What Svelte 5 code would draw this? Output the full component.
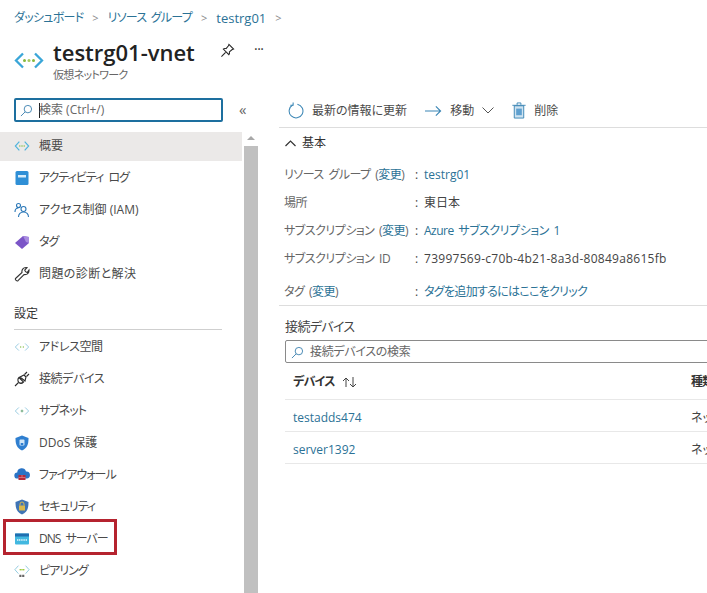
<script>
  const top = [
    { icon: 'vnet', label: '概要', active: true },
    { icon: 'log', label: 'アクティビティ ログ', fit: 'tight' },
    { icon: 'iam', label: 'アクセス制御 (IAM)' },
    { icon: 'tag', label: 'タグ', fit: 'tight' },
    { icon: 'wrench', label: '問題の診断と解決', fit: 'wide' }
  ];
  const settings = [
    { icon: 'addr', label: 'アドレス空間', fit: 'snug' },
    { icon: 'plug', label: '接続デバイス', fit: 'snug' },
    { icon: 'subnet', label: 'サブネット', fit: 'tight' },
    { icon: 'ddos', label: 'DDoS 保護' },
    { icon: 'fw', label: 'ファイアウォール', fit: 'tight' },
    { icon: 'sec', label: 'セキュリティ', fit: 'tight' },
    { icon: 'dns', label: 'DNS サーバー', marked: true, fit: 'tight' },
    { icon: 'peer', label: 'ピアリング', fit: 'tight' }
  ];
</script>

{#snippet icon(name)}
  {#if name === 'vnet'}
    <svg class="ic" viewBox="0 0 18 14" fill="none"><path d="M6 2 1.500 7 6 12M12 2l4.500 5L12 12" stroke="#4fb3dc" stroke-width="1.300"/><circle cx="6.500" cy="7" r=".9" fill="#8cc152"/><circle cx="9" cy="7" r=".9" fill="#8cc152"/><circle cx="11.500" cy="7" r=".9" fill="#8cc152"/></svg>
  {:else if name === 'log'}
    <svg class="ic" viewBox="0 0 16 16"><rect x="1.500" y="1" width="13" height="14" rx="1.500" fill="#2f8fd6"/><rect x="4" y="5" width="8" height="2.500" fill="#d7ecfa"/></svg>
  {:else if name === 'iam'}
    <svg class="ic" viewBox="0 0 16 16" fill="none" stroke="#2b78b8" stroke-width="1.100"><circle cx="4.500" cy="3.500" r="2"/><path d="M1 10c0-2.500 1.500-4 3.500-4"/><circle cx="9.500" cy="7" r="2.500"/><path d="M4.500 15c0-3 2-5 5-5s5 2 5 5"/></svg>
  {:else if name === 'tag'}
    <svg class="ic" viewBox="0 0 16 16"><path d="M1 9 9 2l6 1v6l-7 6z" fill="#7b55c7"/><path d="M9 2l6 1v6l-3-1z" fill="#a88be0"/></svg>
  {:else if name === 'wrench'}
    <svg class="ic" viewBox="0 0 16 16" fill="none" stroke="#333" stroke-width="1.100"><path d="M1.500 12.500 8 6.500C7.500 4 9 1.500 12 1.500l1 .2-2.300 2.300.8 1.700 1.700.8L15 4c.3 3-2 5-5 4.500l-6 6.200c-1 .8-3.300-1-2.500-2.200z"/></svg>
  {:else if name === 'addr'}
    <svg class="ic" viewBox="0 0 18 14" fill="none"><path d="M5.500 3 1.500 7l4 4M12.500 3l4 4-4 4" stroke="#8fc7de" stroke-width="1"/><circle cx="7.500" cy="7" r=".8" fill="#8cc152"/><circle cx="10.500" cy="7" r=".8" fill="#8cc152"/></svg>
  {:else if name === 'plug'}
    <svg class="ic" viewBox="0 0 16 16" fill="none" stroke="#2a2a2a" stroke-width="1.100"><path d="M5 6.500 9.500 11c-1.500 1.500-3.500 1.500-4.700.3S3.500 8 5 6.500zM6 6l4-2 2 2-1 4z"/><path d="M1 15l3.500-3.500M10.500 3.500 13 1M12.500 5.500 15 3"/></svg>
  {:else if name === 'subnet'}
    <svg class="ic" viewBox="0 0 18 14" fill="none"><path d="M5.500 3 1.500 7l4 4M12.500 3l4 4-4 4" stroke="#8fc7de" stroke-width="1"/><path d="M7.500 7h3M9 5.500v3" stroke="#5a9e6f" stroke-width="1"/></svg>
  {:else if name === 'ddos'}
    <svg class="ic" viewBox="0 0 16 16"><path d="M8 .5 14.500 3c0 6 -1 10-6.500 12.500C2.500 13 1.500 9 1.500 3z" fill="#2f7fd0"/><rect x="5.500" y="4.500" width="5" height="6" rx="1" fill="#cfe6f8"/><rect x="6.700" y="8" width="2.600" height="2" fill="#2f7fd0"/></svg>
  {:else if name === 'fw'}
    <svg class="ic" viewBox="0 0 16 16"><path d="M3.500 11.500a3 3 0 0 1-.3-6A4.500 4.500 0 0 1 12 4.500a3.500 3.500 0 0 1 .8 7z" fill="#2a74c6"/><rect x="4.500" y="8" width="7" height="5" fill="#b52b3a"/><path d="M4.500 10.500h7M8 8v2.500" stroke="#e38a94" stroke-width=".7"/></svg>
  {:else if name === 'sec'}
    <svg class="ic" viewBox="0 0 16 16"><path d="M8 .5 14.500 3c0 6-1 10-6.500 12.500C2.500 13 1.500 9 1.500 3z" fill="#3f74b5"/><rect x="5" y="6.500" width="6" height="5" fill="#d9b84c"/><path d="M6 6.500V5a2 2 0 0 1 4 0v1.500" fill="none" stroke="#d9b84c"/></svg>
  {:else if name === 'dns'}
    <svg class="ic" viewBox="0 0 16 16"><rect x="1" y="2.500" width="14" height="11" rx="1" fill="#42b8e0"/><rect x="1" y="2.500" width="14" height="3" fill="#1f6fb0"/><path d="M3 9h10" stroke="#e4f6fc" stroke-width="1.400" stroke-dasharray="1.200 .6"/></svg>
  {:else if name === 'peer'}
    <svg class="ic" viewBox="0 0 18 16" fill="none"><path d="M5 2 1 6.500 5 11M13 2l4 4.500L13 11" stroke="#86c5dc" stroke-width="1"/><circle cx="7" cy="6.500" r=".8" fill="#7fba00"/><circle cx="9" cy="6.500" r=".8" fill="#7fba00"/><circle cx="11" cy="6.500" r=".8" fill="#7fba00"/><path d="M6 13.500h6" stroke="#666" stroke-width="2.400" stroke-dasharray="2.400 .8"/></svg>
  {/if}
{/snippet}

{#snippet search()}
  <svg class="glass" viewBox="0 0 14 14" fill="none" stroke="#3f83b0" stroke-width="1"><circle cx="8.500" cy="5.500" r="4"/><path d="M5.500 8.500 1 13"/></svg>
{/snippet}

<div class="page">
  <header class="head">
    <nav class="crumbs">
      <a class="kana" href="#a">ダッシュボード</a><span class="sep">&gt;</span>
      <a class="kana" href="#a">リソース グループ</a><span class="sep">&gt;</span>
      <a href="#a">testrg01</a><span class="sep">&gt;</span>
    </nav>
    <div class="title">
      <svg class="logo" viewBox="0 0 30 17" fill="none">
        <path d="M9 1.500 2 8.500l7 7" stroke="#3aa6d8" stroke-width="2.300"/>
        <path d="M21 1.500l7 7-7 7" stroke="#3aa6d8" stroke-width="2.300"/>
        <circle cx="10.500" cy="8.500" r="1.500" fill="#86b83c"/><circle cx="15" cy="8.500" r="1.500" fill="#a8c95a"/><circle cx="19.500" cy="8.500" r="1.500" fill="#86b83c"/>
      </svg>
      <div class="names">
        <div class="nameline">
          <h1>testrg01-vnet</h1>
          <svg class="pin" viewBox="0 0 16 16" fill="none" stroke="#222" stroke-width="1.100"><path d="M9.500 1.500 14.500 6.500 13 7l-3 2.500c.4 1.500 0 2.500-.5 3L3.500 6.500c.5-.5 1.500-.9 3-.5L9 3z"/><path d="M6 10 1.500 14.500"/></svg>
          <span class="more">···</span>
        </div>
        <div class="sub">仮想ネットワーク</div>
      </div>
    </div>
  </header>

  <div class="body">
    <aside class="side">
      <div class="searchrow">
        <div class="sbox">{@render search()}<i class="caret"></i><span>検索 (Ctrl+/)</span></div>
        <span class="collapse">«</span>
      </div>
      <div class="menuwrap">
        <div class="menu">
          {#each top as it}
            <div class="item {it.fit ?? ''}" class:active={it.active}>{@render icon(it.icon)}<span>{it.label}</span></div>
          {/each}
          <div class="group">設定</div>
          {#each settings as it}
            <div class="item {it.fit ?? ''}" class:marked={it.marked}>{@render icon(it.icon)}<span>{it.label}</span></div>
          {/each}
        </div>
        <div class="scroll"><div class="up"></div><div class="thumb"></div></div>
      </div>
    </aside>

    <main class="main">
      <div class="cmd">
        <div class="btn">
          <svg class="cmdic" viewBox="0 0 18 18" fill="none" stroke="#3b86b5" stroke-width="1.100"><path d="M6 3.200A7.300 7.300 0 1 0 11 2.400"/><path d="M6.500 .5V3.500H3.500" /></svg>
          <span>最新の情報に更新</span>
        </div>
        <div class="btn">
          <svg class="arrow" viewBox="0 0 18 12" fill="none" stroke="#3b86b5" stroke-width="1.200"><path d="M0 6h16.500M11.500 1l5 5-5 5"/></svg>
          <span>移動</span>
          <svg class="chev" viewBox="0 0 12 7" fill="none" stroke="#555" stroke-width="1"><path d="M.5 .5 6 6l5.500-5.500"/></svg>
        </div>
        <div class="btn">
          <svg class="cmdic trash" viewBox="0 0 14 18"><path d="M2 4h10v13H2z" fill="#cfe3f1" stroke="#3b86b5"/><path d="M0 3.500h14M5 3V1h4v2" stroke="#3b86b5" fill="none"/><rect x="4" y="7" width="6" height="7" fill="#5fa0cf"/></svg>
          <span>削除</span>
        </div>
      </div>

      <div class="section">
        <svg class="up-ch" viewBox="0 0 11 7" fill="none" stroke="#333" stroke-width="1.200"><path d="M.5 6 5.500 1l5 5"/></svg>
        <span>基本</span>
      </div>

      <dl class="props">
        <dt>リソース グループ (<a href="#a">変更</a>)</dt><dd><b>:</b><a href="#a">testrg01</a></dd>
        <dt>場所</dt><dd><b>:</b>東日本</dd>
        <dt>サブスクリプション (<a href="#a">変更</a>)</dt><dd><b>:</b><a class="kana" href="#a">Azure サブスクリプション 1</a></dd>
        <dt>サブスクリプション ID</dt><dd><b>:</b><span class="guid">73997569-c70b-4b21-8a3d-80849a8615fb</span></dd>
        <dt class="tagrow">タグ (<a href="#a">変更</a>)</dt><dd class="tagrow"><b>:</b><a class="kana addtag" href="#a">タグを追加するにはここをクリック</a></dd>
      </dl>

      <h2>接続デバイス</h2>
      <div class="filter">{@render search()}<span>接続デバイスの検索</span></div>

      <div class="row headrow">
        <div class="c1"><strong>デバイス</strong>
          <svg class="sort" viewBox="0 0 16 12" fill="none" stroke="#444" stroke-width="1"><path d="M4 11V2M1 5l3-3 3 3M11 1v10M8 8l3 3 3-3"/></svg>
        </div>
        <div class="c2"><strong>種類</strong></div>
      </div>
      <div class="row"><div class="c1"><a href="#a">testadds474</a></div><div class="c2">ネットワーク</div></div>
      <div class="row"><div class="c1"><a href="#a">server1392</a></div><div class="c2">ネットワーク</div></div>
    </main>
  </div>
</div>

<style>
  :global(body) { margin: 0; background: #fff; }
  .page {
    width: 707px; height: 593px; overflow: hidden; background: #fff; color: #4a4a4a;
    font: 12px/16px "Open Sans", "Noto Sans CJK JP", sans-serif;
    font-feature-settings: "palt";
  }
  a { color: #2b7296; text-decoration: none; }

  .head { height: 92px; padding-left: 14px; box-sizing: border-box; }
  .crumbs { display: flex; align-items: center; height: 18px; padding-top: 9px; gap: 8px; font-size: 13px; }
  .crumbs .kana { font-size: 12px; letter-spacing: -.75px; word-spacing: 2px; }
  .sep { color: #8a8a8a; font-size: 11px; margin: 0 1px; }
  .title { display: flex; align-items: flex-start; margin-top: 10px; }
  .logo { width: 30px; height: 17px; margin-top: 15px; }
  .names { margin-left: 9px; }
  .nameline { display: flex; align-items: center; height: 30px; }
  h1 { margin: 0; font-size: 22px; line-height: 30px; font-weight: 600; color: #222; width: 167px; }
  .pin { width: 15px; height: 15px; margin-top: -3px; }
  .more { margin-left: 19px; font-size: 14px; line-height: 14px; margin-top: -6px; color: #333; letter-spacing: -.5px; }
  .sub { font-size: 11px; line-height: 14px; color: #666; margin-top: 1px; letter-spacing: -.7px; }

  .body { display: flex; height: 501px; }
  .side { width: 258px; flex: none; }
  .searchrow { display: flex; align-items: flex-start; height: 40px; box-sizing: border-box; padding: 6px 0 0 14px; }
  .sbox {
    width: 209px; height: 24px; box-sizing: border-box; border: 2px solid #1d6f9f; border-radius: 2px;
    display: flex; align-items: center; padding-left: 4px; color: #666;
  }
  .glass { width: 13px; height: 13px; flex: none; }
  .caret { width: 1px; height: 15px; background: #222; margin: 0 -1px 0 6px; flex: none; }
  .collapse { margin-left: 16px; font-size: 15px; color: #666; line-height: 20px; margin-top: 1px; }

  .menuwrap { display: flex; height: 461px; }
  .menu { width: 244px; flex: none; }
  .item {
    height: 32px; box-sizing: border-box; padding: 2px 0 0 14px; display: flex; align-items: center; position: relative; color: #4a4a4a; margin-right: 2px;
  }
  .item.active { background: #ebe9e8; height: 29px; padding: 0 0 2px 14px; }
  .tight { letter-spacing: -1px; word-spacing: 3px; }
  .snug { letter-spacing: -.4px; }
  .wide { letter-spacing: .4px; }
  .ic { width: 16px; height: 16px; flex: none; margin-right: 9px; }
  .marked::after {
    content: ""; position: absolute; left: 3px; top: -3px; width: 114px; height: 36px; box-sizing: border-box;
    border: 3px solid #b5232f;
  }
  .group {
    height: 41px; box-sizing: border-box; padding-top: 17px; margin-left: 14px; width: 208px;
    border-bottom: 1px solid #cfcfcf; color: #333;
  }
  .scroll { width: 14px; flex: none; background: #fff; }
  .up { height: 14px; position: relative; }
  .up::before {
    content: ""; position: absolute; left: 3px; top: 4px; border: 4px solid transparent; border-top: 0; border-bottom: 4px solid #a8a8a8;
  }
  .thumb { background: #c0c0c0; height: 447px; }

  .main { flex: 1; min-width: 0; }
  .cmd { display: flex; align-items: center; height: 36px; box-sizing: border-box; margin-left: 21px; padding: 2px 0 0 8px; border-bottom: 1px solid #ddd; gap: 18px; }
  .btn { display: flex; align-items: center; gap: 8px; }
  .cmdic { width: 17px; height: 17px; }
  .trash { width: 14px; }
  .arrow { width: 17px; height: 12px; }
  .chev { width: 12px; height: 7px; }

  .section { display: flex; align-items: center; height: 30px; margin-left: 27px; gap: 6px; color: #333; }
  .up-ch { width: 11px; height: 7px; }

  .props { display: grid; grid-template-columns: 130px 1fr; grid-auto-rows: 28px; margin: 3px 0 0 26px; align-items: center; }
  dt, dd { margin: 0; white-space: nowrap; }
  dt { color: #666; letter-spacing: -.5px; word-spacing: 2px; }
  dd b { font-weight: 400; margin-right: 6px; display: inline-block; width: 3px; }
  dd { color: #444; margin-left: 1px; }
  dd .kana { letter-spacing: -.5px; word-spacing: 2px; }
  dd .addtag { letter-spacing: -.7px; }
  .guid { letter-spacing: .28px; }
  .tagrow { position: relative; top: 5px; }

  h2 { margin: 4px 0 0 21px; padding: 11px 0 0 6px; font-size: 13px; font-weight: 400; line-height: 18px; color: #444; border-top: 1px solid #ddd; letter-spacing: -.6px; }
  .filter {
    margin: 5px 0 0 27px; height: 23px; width: 440px; box-sizing: border-box; border: 1px solid #8a8a8a; border-radius: 2px;
    display: flex; align-items: center; gap: 6px; padding: 1px 0 0 5px; color: #666; letter-spacing: -.3px;
  }
  .row { display: flex; align-items: center; height: 32px; margin-left: 27px; border-bottom: 1px solid #e8e8e8; box-sizing: border-box; width: 440px; padding-top: 4px; }
  .headrow { height: 37px; padding-top: 2px; }
  .c1 { width: 406px; padding-left: 8px; box-sizing: border-box; flex: none; display: flex; align-items: center; }
  .c2 { white-space: nowrap; color: #444; }
  strong { font-weight: 600; color: #333; letter-spacing: -.8px; }
  .sort { width: 16px; height: 12px; margin-left: 7px; }
</style>
